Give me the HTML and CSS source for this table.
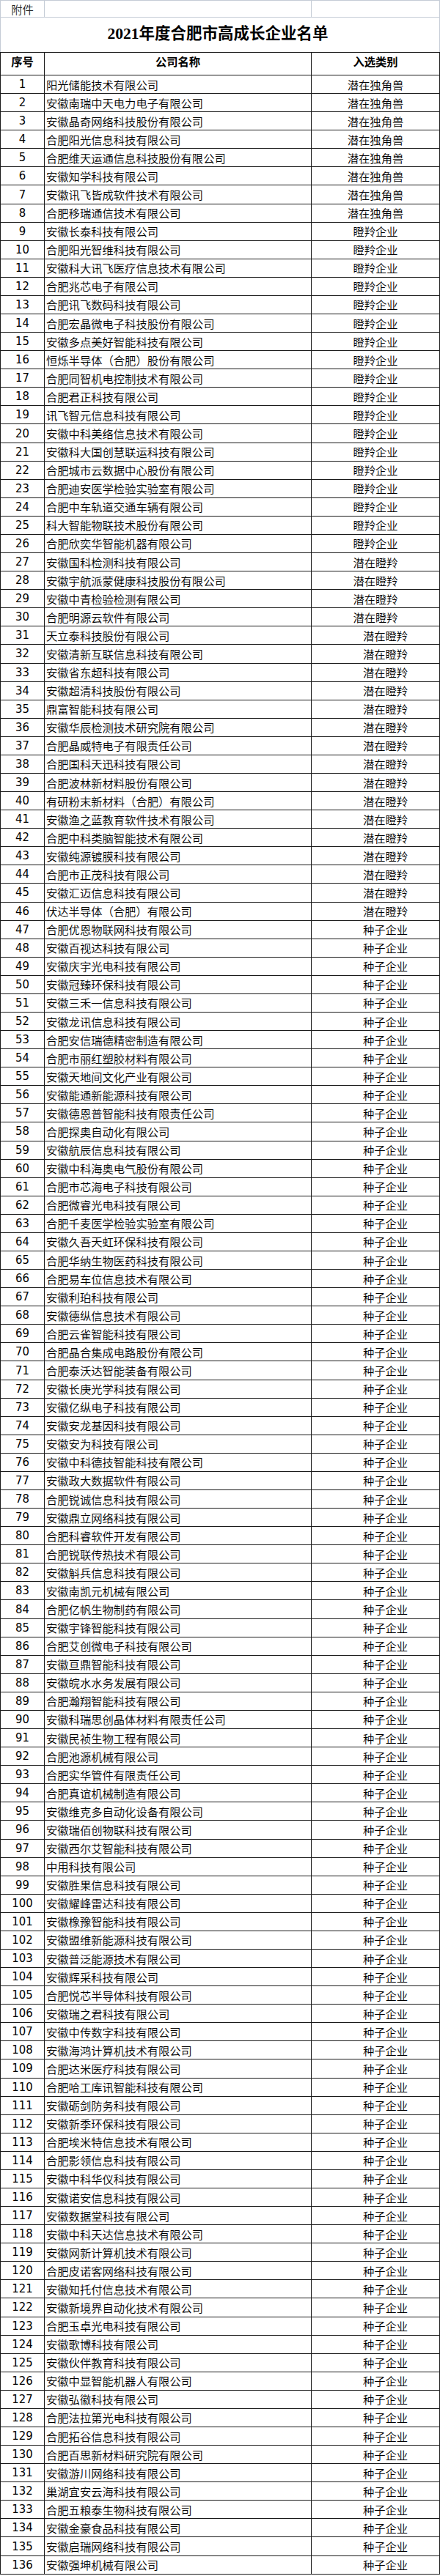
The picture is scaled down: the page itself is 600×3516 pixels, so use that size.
FILE: index.html
```html
<!DOCTYPE html>
<html lang="zh-CN">
<head>
<meta charset="utf-8">
<title>2021年度合肥市高成长企业名单</title>
<link rel="stylesheet" href="styles.css">
</head>
<body>
<div class="sheet">
  <div class="row top">
    <div class="cell c1">附件</div>
    <div class="cell c2"></div>
    <div class="cell c3"></div>
  </div>
  <div class="title-row"><h1 class="title"><span class="tnum">2021</span>年度合肥市高成长企业名单</h1></div>
  <div class="row head">
    <div class="cell c1">序号</div>
    <div class="cell c2 center">公司名称</div>
    <div class="cell c3">入选类别</div>
  </div>
  <div class="body">
    <div class="row"><div class="cell c1">1</div><div class="cell c2">阳光储能技术有限公司</div><div class="cell c3">潜在独角兽</div></div>
    <div class="row"><div class="cell c1">2</div><div class="cell c2">安徽南瑞中天电力电子有限公司</div><div class="cell c3">潜在独角兽</div></div>
    <div class="row"><div class="cell c1">3</div><div class="cell c2">安徽晶奇网络科技股份有限公司</div><div class="cell c3">潜在独角兽</div></div>
    <div class="row"><div class="cell c1">4</div><div class="cell c2">合肥阳光信息科技有限公司</div><div class="cell c3">潜在独角兽</div></div>
    <div class="row"><div class="cell c1">5</div><div class="cell c2">合肥维天运通信息科技股份有限公司</div><div class="cell c3">潜在独角兽</div></div>
    <div class="row"><div class="cell c1">6</div><div class="cell c2">安徽知学科技有限公司</div><div class="cell c3">潜在独角兽</div></div>
    <div class="row"><div class="cell c1">7</div><div class="cell c2">安徽讯飞皆成软件技术有限公司</div><div class="cell c3">潜在独角兽</div></div>
    <div class="row"><div class="cell c1">8</div><div class="cell c2">合肥移瑞通信技术有限公司</div><div class="cell c3">潜在独角兽</div></div>
    <div class="row"><div class="cell c1">9</div><div class="cell c2">安徽长泰科技有限公司</div><div class="cell c3">瞪羚企业</div></div>
    <div class="row"><div class="cell c1">10</div><div class="cell c2">合肥阳光智维科技有限公司</div><div class="cell c3">瞪羚企业</div></div>
    <div class="row"><div class="cell c1">11</div><div class="cell c2">安徽科大讯飞医疗信息技术有限公司</div><div class="cell c3">瞪羚企业</div></div>
    <div class="row"><div class="cell c1">12</div><div class="cell c2">合肥兆芯电子有限公司</div><div class="cell c3">瞪羚企业</div></div>
    <div class="row"><div class="cell c1">13</div><div class="cell c2">合肥讯飞数码科技有限公司</div><div class="cell c3">瞪羚企业</div></div>
    <div class="row"><div class="cell c1">14</div><div class="cell c2">合肥宏晶微电子科技股份有限公司</div><div class="cell c3">瞪羚企业</div></div>
    <div class="row"><div class="cell c1">15</div><div class="cell c2">安徽多点美好智能科技有限公司</div><div class="cell c3">瞪羚企业</div></div>
    <div class="row"><div class="cell c1">16</div><div class="cell c2">恒烁半导体（合肥）股份有限公司</div><div class="cell c3">瞪羚企业</div></div>
    <div class="row"><div class="cell c1">17</div><div class="cell c2">合肥同智机电控制技术有限公司</div><div class="cell c3">瞪羚企业</div></div>
    <div class="row"><div class="cell c1">18</div><div class="cell c2">合肥君正科技有限公司</div><div class="cell c3">瞪羚企业</div></div>
    <div class="row"><div class="cell c1">19</div><div class="cell c2">讯飞智元信息科技有限公司</div><div class="cell c3">瞪羚企业</div></div>
    <div class="row"><div class="cell c1">20</div><div class="cell c2">安徽中科美络信息技术有限公司</div><div class="cell c3">瞪羚企业</div></div>
    <div class="row"><div class="cell c1">21</div><div class="cell c2">安徽科大国创慧联运科技有限公司</div><div class="cell c3">瞪羚企业</div></div>
    <div class="row"><div class="cell c1">22</div><div class="cell c2">合肥城市云数据中心股份有限公司</div><div class="cell c3">瞪羚企业</div></div>
    <div class="row"><div class="cell c1">23</div><div class="cell c2">合肥迪安医学检验实验室有限公司</div><div class="cell c3">瞪羚企业</div></div>
    <div class="row"><div class="cell c1">24</div><div class="cell c2">合肥中车轨道交通车辆有限公司</div><div class="cell c3">瞪羚企业</div></div>
    <div class="row"><div class="cell c1">25</div><div class="cell c2">科大智能物联技术股份有限公司</div><div class="cell c3">瞪羚企业</div></div>
    <div class="row"><div class="cell c1">26</div><div class="cell c2">合肥欣奕华智能机器有限公司</div><div class="cell c3">瞪羚企业</div></div>
    <div class="row"><div class="cell c1">27</div><div class="cell c2">安徽国科检测科技有限公司</div><div class="cell c3">潜在瞪羚</div></div>
    <div class="row"><div class="cell c1">28</div><div class="cell c2">安徽宇航派蒙健康科技股份有限公司</div><div class="cell c3">潜在瞪羚</div></div>
    <div class="row"><div class="cell c1">29</div><div class="cell c2">安徽中青检验检测有限公司</div><div class="cell c3">潜在瞪羚</div></div>
    <div class="row"><div class="cell c1">30</div><div class="cell c2">合肥明源云软件有限公司</div><div class="cell c3">潜在瞪羚</div></div>
    <div class="row"><div class="cell c1">31</div><div class="cell c2">天立泰科技股份有限公司</div><div class="cell c3 shift">潜在瞪羚</div></div>
    <div class="row"><div class="cell c1">32</div><div class="cell c2">安徽清新互联信息科技有限公司</div><div class="cell c3 shift">潜在瞪羚</div></div>
    <div class="row"><div class="cell c1">33</div><div class="cell c2">安徽省东超科技有限公司</div><div class="cell c3 shift">潜在瞪羚</div></div>
    <div class="row"><div class="cell c1">34</div><div class="cell c2">安徽超清科技股份有限公司</div><div class="cell c3 shift">潜在瞪羚</div></div>
    <div class="row"><div class="cell c1">35</div><div class="cell c2">鼎富智能科技有限公司</div><div class="cell c3 shift">潜在瞪羚</div></div>
    <div class="row"><div class="cell c1">36</div><div class="cell c2">安徽华辰检测技术研究院有限公司</div><div class="cell c3 shift">潜在瞪羚</div></div>
    <div class="row"><div class="cell c1">37</div><div class="cell c2">合肥晶威特电子有限责任公司</div><div class="cell c3 shift">潜在瞪羚</div></div>
    <div class="row"><div class="cell c1">38</div><div class="cell c2">合肥国科天迅科技有限公司</div><div class="cell c3 shift">潜在瞪羚</div></div>
    <div class="row"><div class="cell c1">39</div><div class="cell c2">合肥波林新材料股份有限公司</div><div class="cell c3 shift">潜在瞪羚</div></div>
    <div class="row"><div class="cell c1">40</div><div class="cell c2">有研粉末新材料（合肥）有限公司</div><div class="cell c3 shift">潜在瞪羚</div></div>
    <div class="row"><div class="cell c1">41</div><div class="cell c2">安徽渔之蓝教育软件技术有限公司</div><div class="cell c3 shift">潜在瞪羚</div></div>
    <div class="row"><div class="cell c1">42</div><div class="cell c2">合肥中科类脑智能技术有限公司</div><div class="cell c3 shift">潜在瞪羚</div></div>
    <div class="row"><div class="cell c1">43</div><div class="cell c2">安徽纯源镀膜科技有限公司</div><div class="cell c3 shift">潜在瞪羚</div></div>
    <div class="row"><div class="cell c1">44</div><div class="cell c2">合肥市正茂科技有限公司</div><div class="cell c3 shift">潜在瞪羚</div></div>
    <div class="row"><div class="cell c1">45</div><div class="cell c2">安徽汇迈信息科技有限公司</div><div class="cell c3 shift">潜在瞪羚</div></div>
    <div class="row"><div class="cell c1">46</div><div class="cell c2">伏达半导体（合肥）有限公司</div><div class="cell c3 shift">潜在瞪羚</div></div>
    <div class="row"><div class="cell c1">47</div><div class="cell c2">合肥优恩物联网科技有限公司</div><div class="cell c3 shift">种子企业</div></div>
    <div class="row"><div class="cell c1">48</div><div class="cell c2">安徽百视达科技有限公司</div><div class="cell c3 shift">种子企业</div></div>
    <div class="row"><div class="cell c1">49</div><div class="cell c2">安徽庆宇光电科技有限公司</div><div class="cell c3 shift">种子企业</div></div>
    <div class="row"><div class="cell c1">50</div><div class="cell c2">安徽冠臻环保科技有限公司</div><div class="cell c3 shift">种子企业</div></div>
    <div class="row"><div class="cell c1">51</div><div class="cell c2">安徽三禾一信息科技有限公司</div><div class="cell c3 shift">种子企业</div></div>
    <div class="row"><div class="cell c1">52</div><div class="cell c2">安徽龙讯信息科技有限公司</div><div class="cell c3 shift">种子企业</div></div>
    <div class="row"><div class="cell c1">53</div><div class="cell c2">合肥安信瑞德精密制造有限公司</div><div class="cell c3 shift">种子企业</div></div>
    <div class="row"><div class="cell c1">54</div><div class="cell c2">合肥市丽红塑胶材料有限公司</div><div class="cell c3 shift">种子企业</div></div>
    <div class="row"><div class="cell c1">55</div><div class="cell c2">安徽天地间文化产业有限公司</div><div class="cell c3 shift">种子企业</div></div>
    <div class="row"><div class="cell c1">56</div><div class="cell c2">安徽能通新能源科技有限公司</div><div class="cell c3 shift">种子企业</div></div>
    <div class="row"><div class="cell c1">57</div><div class="cell c2">安徽德恩普智能科技有限责任公司</div><div class="cell c3 shift">种子企业</div></div>
    <div class="row"><div class="cell c1">58</div><div class="cell c2">合肥探奥自动化有限公司</div><div class="cell c3 shift">种子企业</div></div>
    <div class="row"><div class="cell c1">59</div><div class="cell c2">安徽航辰信息科技有限公司</div><div class="cell c3 shift">种子企业</div></div>
    <div class="row"><div class="cell c1">60</div><div class="cell c2">安徽中科海奥电气股份有限公司</div><div class="cell c3 shift">种子企业</div></div>
    <div class="row"><div class="cell c1">61</div><div class="cell c2">合肥市芯海电子科技有限公司</div><div class="cell c3 shift">种子企业</div></div>
    <div class="row"><div class="cell c1">62</div><div class="cell c2">合肥微睿光电科技有限公司</div><div class="cell c3 shift">种子企业</div></div>
    <div class="row"><div class="cell c1">63</div><div class="cell c2">合肥千麦医学检验实验室有限公司</div><div class="cell c3 shift">种子企业</div></div>
    <div class="row"><div class="cell c1">64</div><div class="cell c2">安徽久吾天虹环保科技有限公司</div><div class="cell c3 shift">种子企业</div></div>
    <div class="row"><div class="cell c1">65</div><div class="cell c2">合肥华纳生物医药科技有限公司</div><div class="cell c3 shift">种子企业</div></div>
    <div class="row"><div class="cell c1">66</div><div class="cell c2">合肥易车位信息技术有限公司</div><div class="cell c3 shift">种子企业</div></div>
    <div class="row"><div class="cell c1">67</div><div class="cell c2">安徽利珀科技有限公司</div><div class="cell c3 shift">种子企业</div></div>
    <div class="row"><div class="cell c1">68</div><div class="cell c2">安徽德纵信息技术有限公司</div><div class="cell c3 shift">种子企业</div></div>
    <div class="row"><div class="cell c1">69</div><div class="cell c2">合肥云雀智能科技有限公司</div><div class="cell c3 shift">种子企业</div></div>
    <div class="row"><div class="cell c1">70</div><div class="cell c2">合肥晶合集成电路股份有限公司</div><div class="cell c3 shift">种子企业</div></div>
    <div class="row"><div class="cell c1">71</div><div class="cell c2">合肥泰沃达智能装备有限公司</div><div class="cell c3 shift">种子企业</div></div>
    <div class="row"><div class="cell c1">72</div><div class="cell c2">安徽长庚光学科技有限公司</div><div class="cell c3 shift">种子企业</div></div>
    <div class="row"><div class="cell c1">73</div><div class="cell c2">安徽亿纵电子科技有限公司</div><div class="cell c3 shift">种子企业</div></div>
    <div class="row"><div class="cell c1">74</div><div class="cell c2">安徽安龙基因科技有限公司</div><div class="cell c3 shift">种子企业</div></div>
    <div class="row"><div class="cell c1">75</div><div class="cell c2">安徽安为科技有限公司</div><div class="cell c3 shift">种子企业</div></div>
    <div class="row"><div class="cell c1">76</div><div class="cell c2">安徽中科德技智能科技有限公司</div><div class="cell c3 shift">种子企业</div></div>
    <div class="row"><div class="cell c1">77</div><div class="cell c2">安徽政大数据软件有限公司</div><div class="cell c3 shift">种子企业</div></div>
    <div class="row"><div class="cell c1">78</div><div class="cell c2">合肥锐诚信息科技有限公司</div><div class="cell c3 shift">种子企业</div></div>
    <div class="row"><div class="cell c1">79</div><div class="cell c2">安徽鼎立网络科技有限公司</div><div class="cell c3 shift">种子企业</div></div>
    <div class="row"><div class="cell c1">80</div><div class="cell c2">合肥科睿软件开发有限公司</div><div class="cell c3 shift">种子企业</div></div>
    <div class="row"><div class="cell c1">81</div><div class="cell c2">合肥锐联传热技术有限公司</div><div class="cell c3 shift">种子企业</div></div>
    <div class="row"><div class="cell c1">82</div><div class="cell c2">安徽斛兵信息科技有限公司</div><div class="cell c3 shift">种子企业</div></div>
    <div class="row"><div class="cell c1">83</div><div class="cell c2">安徽南凯元机械有限公司</div><div class="cell c3 shift">种子企业</div></div>
    <div class="row"><div class="cell c1">84</div><div class="cell c2">合肥亿帆生物制药有限公司</div><div class="cell c3 shift">种子企业</div></div>
    <div class="row"><div class="cell c1">85</div><div class="cell c2">安徽宇锋智能科技有限公司</div><div class="cell c3 shift">种子企业</div></div>
    <div class="row"><div class="cell c1">86</div><div class="cell c2">合肥艾创微电子科技有限公司</div><div class="cell c3 shift">种子企业</div></div>
    <div class="row"><div class="cell c1">87</div><div class="cell c2">安徽亘鼎智能科技有限公司</div><div class="cell c3 shift">种子企业</div></div>
    <div class="row"><div class="cell c1">88</div><div class="cell c2">安徽皖水水务发展有限公司</div><div class="cell c3 shift">种子企业</div></div>
    <div class="row"><div class="cell c1">89</div><div class="cell c2">合肥瀚翔智能科技有限公司</div><div class="cell c3 shift">种子企业</div></div>
    <div class="row"><div class="cell c1">90</div><div class="cell c2">安徽科瑞思创晶体材料有限责任公司</div><div class="cell c3 shift">种子企业</div></div>
    <div class="row"><div class="cell c1">91</div><div class="cell c2">安徽民祯生物工程有限公司</div><div class="cell c3 shift">种子企业</div></div>
    <div class="row"><div class="cell c1">92</div><div class="cell c2">合肥池源机械有限公司</div><div class="cell c3 shift">种子企业</div></div>
    <div class="row"><div class="cell c1">93</div><div class="cell c2">合肥实华管件有限责任公司</div><div class="cell c3 shift">种子企业</div></div>
    <div class="row"><div class="cell c1">94</div><div class="cell c2">合肥真谊机械制造有限公司</div><div class="cell c3 shift">种子企业</div></div>
    <div class="row"><div class="cell c1">95</div><div class="cell c2">安徽维克多自动化设备有限公司</div><div class="cell c3 shift">种子企业</div></div>
    <div class="row"><div class="cell c1">96</div><div class="cell c2">安徽瑞佰创物联科技有限公司</div><div class="cell c3 shift">种子企业</div></div>
    <div class="row"><div class="cell c1">97</div><div class="cell c2">安徽西尔艾智能科技有限公司</div><div class="cell c3 shift">种子企业</div></div>
    <div class="row"><div class="cell c1">98</div><div class="cell c2">中用科技有限公司</div><div class="cell c3 shift">种子企业</div></div>
    <div class="row"><div class="cell c1">99</div><div class="cell c2">安徽胜果信息科技有限公司</div><div class="cell c3 shift">种子企业</div></div>
    <div class="row"><div class="cell c1">100</div><div class="cell c2">安徽耀峰雷达科技有限公司</div><div class="cell c3 shift">种子企业</div></div>
    <div class="row"><div class="cell c1">101</div><div class="cell c2">安徽橡豫智能科技有限公司</div><div class="cell c3 shift">种子企业</div></div>
    <div class="row"><div class="cell c1">102</div><div class="cell c2">安徽盟维新能源科技有限公司</div><div class="cell c3 shift">种子企业</div></div>
    <div class="row"><div class="cell c1">103</div><div class="cell c2">安徽普泛能源技术有限公司</div><div class="cell c3 shift">种子企业</div></div>
    <div class="row"><div class="cell c1">104</div><div class="cell c2">安徽辉采科技有限公司</div><div class="cell c3 shift">种子企业</div></div>
    <div class="row"><div class="cell c1">105</div><div class="cell c2">合肥悦芯半导体科技有限公司</div><div class="cell c3 shift">种子企业</div></div>
    <div class="row"><div class="cell c1">106</div><div class="cell c2">安徽瑞之君科技有限公司</div><div class="cell c3 shift">种子企业</div></div>
    <div class="row"><div class="cell c1">107</div><div class="cell c2">安徽中传数字科技有限公司</div><div class="cell c3 shift">种子企业</div></div>
    <div class="row"><div class="cell c1">108</div><div class="cell c2">安徽海鸿计算机技术有限公司</div><div class="cell c3 shift">种子企业</div></div>
    <div class="row"><div class="cell c1">109</div><div class="cell c2">合肥达米医疗科技有限公司</div><div class="cell c3 shift">种子企业</div></div>
    <div class="row"><div class="cell c1">110</div><div class="cell c2">合肥哈工库讯智能科技有限公司</div><div class="cell c3 shift">种子企业</div></div>
    <div class="row"><div class="cell c1">111</div><div class="cell c2">安徽砺剑防务科技有限公司</div><div class="cell c3 shift">种子企业</div></div>
    <div class="row"><div class="cell c1">112</div><div class="cell c2">安徽新季环保科技有限公司</div><div class="cell c3 shift">种子企业</div></div>
    <div class="row"><div class="cell c1">113</div><div class="cell c2">合肥埃米特信息技术有限公司</div><div class="cell c3 shift">种子企业</div></div>
    <div class="row"><div class="cell c1">114</div><div class="cell c2">合肥影领信息科技有限公司</div><div class="cell c3 shift">种子企业</div></div>
    <div class="row"><div class="cell c1">115</div><div class="cell c2">安徽中科华仪科技有限公司</div><div class="cell c3 shift">种子企业</div></div>
    <div class="row"><div class="cell c1">116</div><div class="cell c2">安徽诺安信息科技有限公司</div><div class="cell c3 shift">种子企业</div></div>
    <div class="row"><div class="cell c1">117</div><div class="cell c2">安徽数据堂科技有限公司</div><div class="cell c3 shift">种子企业</div></div>
    <div class="row"><div class="cell c1">118</div><div class="cell c2">安徽中科天达信息技术有限公司</div><div class="cell c3 shift">种子企业</div></div>
    <div class="row"><div class="cell c1">119</div><div class="cell c2">安徽网新计算机技术有限公司</div><div class="cell c3 shift">种子企业</div></div>
    <div class="row"><div class="cell c1">120</div><div class="cell c2">合肥皮诺客网络科技有限公司</div><div class="cell c3 shift">种子企业</div></div>
    <div class="row"><div class="cell c1">121</div><div class="cell c2">安徽知托付信息技术有限公司</div><div class="cell c3 shift">种子企业</div></div>
    <div class="row"><div class="cell c1">122</div><div class="cell c2">安徽新境界自动化技术有限公司</div><div class="cell c3 shift">种子企业</div></div>
    <div class="row"><div class="cell c1">123</div><div class="cell c2">合肥玉卓光电科技有限公司</div><div class="cell c3 shift">种子企业</div></div>
    <div class="row"><div class="cell c1">124</div><div class="cell c2">安徽歌博科技有限公司</div><div class="cell c3 shift">种子企业</div></div>
    <div class="row"><div class="cell c1">125</div><div class="cell c2">安徽伙伴教育科技有限公司</div><div class="cell c3 shift">种子企业</div></div>
    <div class="row"><div class="cell c1">126</div><div class="cell c2">安徽中显智能机器人有限公司</div><div class="cell c3 shift">种子企业</div></div>
    <div class="row"><div class="cell c1">127</div><div class="cell c2">安徽弘徽科技有限公司</div><div class="cell c3 shift">种子企业</div></div>
    <div class="row"><div class="cell c1">128</div><div class="cell c2">合肥法拉第光电科技有限公司</div><div class="cell c3 shift">种子企业</div></div>
    <div class="row"><div class="cell c1">129</div><div class="cell c2">合肥拓谷信息科技有限公司</div><div class="cell c3 shift">种子企业</div></div>
    <div class="row"><div class="cell c1">130</div><div class="cell c2">合肥百思新材料研究院有限公司</div><div class="cell c3 shift">种子企业</div></div>
    <div class="row"><div class="cell c1">131</div><div class="cell c2">安徽游川网络科技有限公司</div><div class="cell c3 shift">种子企业</div></div>
    <div class="row"><div class="cell c1">132</div><div class="cell c2">巢湖宜安云海科技有限公司</div><div class="cell c3 shift">种子企业</div></div>
    <div class="row"><div class="cell c1">133</div><div class="cell c2">合肥五粮泰生物科技有限公司</div><div class="cell c3 shift">种子企业</div></div>
    <div class="row"><div class="cell c1">134</div><div class="cell c2">安徽金豪食品科技有限公司</div><div class="cell c3 shift">种子企业</div></div>
    <div class="row"><div class="cell c1">135</div><div class="cell c2">安徽启瑞网络科技有限公司</div><div class="cell c3 shift">种子企业</div></div>
    <div class="row"><div class="cell c1">136</div><div class="cell c2">安徽强坤机械有限公司</div><div class="cell c3 shift">种子企业</div></div>
  </div>
</div>
</body>
</html>
```
FILE: styles.css
```css
html, body {
  margin: 0;
  padding: 0;
  background: #ffffff;
}

body {
  font-family: "Noto Sans CJK SC", "Noto Sans", sans-serif;
  font-size: 15.3px;
  font-weight: 350;
  color: #000000;
}

.sheet {
  width: 600px;
}

.row {
  display: grid;
  grid-template-columns: 61px 364px 175px;
  box-sizing: border-box;
}

.cell {
  box-sizing: border-box;
  display: flex;
  align-items: center;
  border-right: 1px solid #1a1a1a;
  white-space: nowrap;
  overflow: hidden;
  line-height: 18px;
}

.c1 {
  justify-content: center;
  border-left: 1px solid #1a1a1a;
  font-family: "Liberation Sans Narrow", "DejaVu Sans Condensed", "Liberation Sans", sans-serif;
  font-size: 16.5px;
  font-weight: 400;
}

.c2 {
  padding-left: 2px;
}

.c3 {
  justify-content: center;
}

.shift {
  padding-left: 27px;
}

/* top "附件" row with light sheet gridlines */
.top {
  height: 24px;
  border-top: 1px solid #c5ccd6;
  border-bottom: 1px solid #c5ccd6;
}

.top .cell {
  border-right-color: #c5ccd6;
}

.top .c1 {
  border-left-color: #c5ccd6;
  font-family: "Noto Sans CJK SC", sans-serif;
  font-size: 15.3px;
  font-weight: 350;
  color: #222222;
}

/* title row */
.title-row {
  box-sizing: border-box;
  height: 47px;
  border-left: 1px solid #c5ccd6;
  border-right: 1px solid #c5ccd6;
  display: flex;
  align-items: center;
  justify-content: center;
  padding-bottom: 6px;
}

.title {
  margin: 0;
  font-family: "Noto Sans CJK SC", sans-serif;
  font-size: 21.5px;
  font-weight: 700;
  line-height: 24px;
  position: relative;
  left: -3px;
}

.tnum {
  font-family: "Liberation Serif", serif;
  font-weight: 700;
}

/* header row */
.head {
  height: 32px;
  border-top: 1px solid #1a1a1a;
  border-bottom: 1px solid #1a1a1a;
}

.head .cell {
  align-items: flex-start;
  padding-top: 2px;
  font-family: "Noto Sans CJK SC", sans-serif;
  font-size: 15.3px;
  font-weight: 700;
}

.head .center {
  justify-content: center;
  padding-left: 0;
}

/* data rows */
.body .row {
  height: 25.08px;
  border-bottom: 1px solid #1a1a1a;
}

.body .c2,
.body .c3 {
  padding-bottom: 1px;
}
```
